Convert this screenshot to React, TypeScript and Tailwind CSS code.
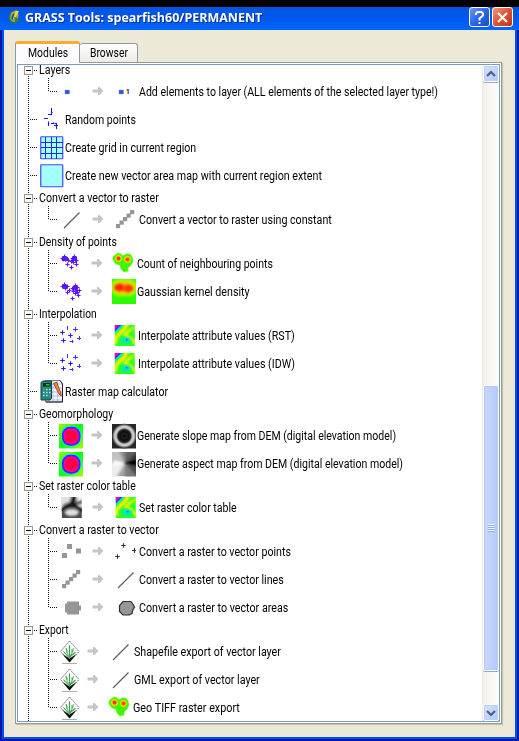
import { useLayoutEffect, useRef, useState } from "react";
import type { ReactNode } from "react";

/* Text squeezed horizontally to a known width, like the narrow bitmap system font. */
function Fit({ width, children }: { width: number; children: string }) {
  const ref = useRef<HTMLSpanElement>(null);
  const [scale, setScale] = useState(1);
  useLayoutEffect(() => {
    if (ref.current) setScale(width / ref.current.offsetWidth);
  }, [width, children]);
  return (
    <span className="block shrink-0 whitespace-nowrap" style={{ width }}>
      <span ref={ref} className="inline-block origin-left" style={{ transform: `scaleX(${scale})` }}>
        {children}
      </span>
    </span>
  );
}

function Defs() {
  return (
    <svg width="0" height="0" className="block h-0 w-0">
      <defs>
        <radialGradient id="hot">
          <stop offset="0" stopColor="#ff1800" />
          <stop offset=".3" stopColor="#ff5a00" />
          <stop offset=".6" stopColor="#ffd800" />
          <stop offset="1" stopColor="#50ff00" stopOpacity="0" />
        </radialGradient>
        <radialGradient id="slope">
          <stop offset="0" stopColor="#000" />
          <stop offset=".2" stopColor="#222" />
          <stop offset=".35" stopColor="#0c0c0c" />
          <stop offset=".52" stopColor="#262626" />
          <stop offset=".66" stopColor="#c4c4c4" />
          <stop offset=".78" stopColor="#d0d0d0" />
          <stop offset="1" stopColor="#262626" />
        </radialGradient>
        <linearGradient id="rim" x1="0" y1="0" x2="1" y2="1">
          <stop offset="0" stopColor="#8cff00" />
          <stop offset=".5" stopColor="#00ff18" />
          <stop offset="1" stopColor="#a8ff00" />
        </linearGradient>
        <filter id="b0" x="-30%" y="-30%" width="160%" height="160%"><feGaussianBlur stdDeviation=".4" /></filter>
        <filter id="b1" x="-30%" y="-30%" width="160%" height="160%"><feGaussianBlur stdDeviation=".8" /></filter>
        <filter id="b2" x="-50%" y="-50%" width="200%" height="200%"><feGaussianBlur stdDeviation="1.6" /></filter>
      </defs>
    </svg>
  );
}

function Icon({ children }: { children: ReactNode }) {
  return <svg className="block shrink-0" width="24" height="28" viewBox="0 0 24 28">{children}</svg>;
}

const Arrow = () => (
  <svg className="block shrink-0" width="12" height="28" viewBox="0 0 12 28">
    <path d="M.5 11.500h5.500V9h1.500L11 12.400v1.200L7.500 17H6v-2.500H.5z" fill="#c5c5c5" />
  </svg>
);

const Dot = () => <Icon><rect x="6" y="12" width="4.500" height="4" fill="#3156cf" stroke="#7b96e0" strokeWidth=".4" /></Icon>;
const DotOne = () => (
  <Icon>
    <rect x="7" y="12" width="4.500" height="4" fill="#3156cf" stroke="#7b96e0" strokeWidth=".4" />
    <text x="14" y="16" fontSize="6.500" fontFamily="Roboto, sans-serif" fontWeight="700" fill="#111">1</text>
  </Icon>
);
const Random = () => (
  <Icon>
    <path d="M11.500 2v7M8 8.500h4M4 12.500h4M8.500 15.500v4.500M11 17.500h6M16.500 17v6M14 19.500h4" stroke="#1515ff" strokeWidth="1.100" fill="none" />
    <path d="M13 16l2 2M12 6.500h1" stroke="#77f" />
  </Icon>
);
const Area = () => <Icon><rect x=".75" y="2.750" width="22" height="22" rx=".5" fill="#a6ffff" stroke="#4348ff" strokeWidth="1.200" /></Icon>;
const Grid = () => (
  <Icon>
    <rect x=".75" y="2.750" width="22" height="22" rx=".5" fill="#a6ffff" stroke="#4348ff" strokeWidth="1.200" />
    <path d="M5.500 3v22M11.500 3v22M16.500 3v22M1 8.500h22M1 13.500h22M1 19.500h22" stroke="#202fd0" strokeWidth="1" />
  </Icon>
);
const Line = () => <Icon><path d="M5 22L20.500 6.500" stroke="#606060" strokeWidth="1.300" /></Icon>;
const Stairs = () => (
  <Icon>
    {[0, 1, 2, 3, 4].map((i) => (
      <rect key={i} x={4 + i * 3.500} y={18 - i * 3.500} width="4.200" height="4.200" fill="#959595" />
    ))}
  </Icon>
);

function Crosses({ pts, color, r = 2 }: { pts: number[][]; color: string; r?: number }) {
  return <path d={pts.map(([x, y]) => `M${x - r} ${y}h${2 * r}M${x} ${y - r}v${2 * r}`).join("")} stroke={color} strokeWidth="1.100" fill="none" />;
}
const DenseA = () => (
  <Icon>
    <Crosses color="#5a14ff" pts={[[3.500, 8.500], [5.500, 6.500], [6.500, 9.500], [7.500, 8.500], [4.500, 9.500], [8.500, 14.500], [9.500, 10.500], [13.500, 8.500], [15.500, 6.500], [16.500, 10.500], [12.500, 11.500], [17.500, 10.500], [17.500, 14.500], [12.500, 17.500], [14.500, 12.500]]} />
    <path d="M3 7h6v4H3zM13 7h5v4h-5z" fill="#5a14ff" />
  </Icon>
);
const DenseB = () => (
  <Icon>
    <Crosses color="#5a14ff" pts={[[3.500, 8.500], [5.500, 6.500], [6.500, 10.500], [8.500, 8.500], [8.500, 14.500], [10.500, 12.500], [13.500, 10.500], [16.500, 7.500], [18.500, 9.500], [17.500, 12.500], [14.500, 13.500], [19.500, 17.500], [20.500, 12.500], [13.500, 20.500], [16.500, 15.500], [18.500, 14.500]]} />
    <path d="M4 7h4v4H4zM14 8h5v4h-5z" fill="#5a14ff" />
  </Icon>
);
const Sparse = () => (
  <Icon>
    <Crosses color="#2218f5" pts={[[3.500, 10.500], [11.500, 13.500], [4.500, 18.500]]} r={2.300} />
    <path d="M8.500 4v4M14 7.500h5M16.500 5v4.500M10.500 19.500h4M13.500 18v3M18 16.500h4M20.500 14v4" stroke="#3b32f5" strokeWidth="1" />
  </Icon>
);
const Blob = () => (
  <Icon>
    <path d="M1 7l2-2 3-2 3 1 2 2 3-2h4l2 3 1 4-2 4-3 3v3l-4 1-3-3-1-4-4-1-3-4z" fill="#3df500" stroke="#69ff00" strokeWidth=".7" />
    <circle cx="6.500" cy="8.500" r="4.600" fill="url(#hot)" />
    <circle cx="15.500" cy="9.500" r="4.600" fill="url(#hot)" />
    <circle cx="6.500" cy="8.500" r="1.400" fill="#f22b10" filter="url(#b0)" />
  </Icon>
);
const Kernel = () => (
  <Icon>
    <svg y="1" width="24" height="25" viewBox="0 1 24 25">
      <rect y="1" width="24" height="25" fill="#2dfb00" />
      <rect x="-1" y="1" width="26" height="17" rx="8" fill="#a4ff00" filter="url(#b2)" />
      <ellipse cx="12" cy="10" rx="11" ry="6" fill="#ffb700" filter="url(#b2)" />
      <ellipse cx="7.500" cy="9.500" rx="5" ry="3.700" fill="#ff2000" filter="url(#b1)" />
      <ellipse cx="16" cy="10.500" rx="5" ry="3.700" fill="#ff3200" filter="url(#b1)" />
    </svg>
  </Icon>
);
const Rainbow = () => (
  <Icon>
    <svg x="2.500" y="3" width="20.500" height="21" viewBox="0 0 20 21">
      <rect width="20" height="21" fill="#28ff20" />
      <g filter="url(#b1)" fill="none">
        <path d="M13-2L9 5 5 8l-4 5-1 6" stroke="#fff400" strokeWidth="3.600" />
        <path d="M21 2l-6 3-5 5 6 3 5 6" stroke="#fff400" strokeWidth="2.600" />
        <path d="M11 2L4 9 0 13" stroke="#ffe800" strokeWidth="2" />
        <path d="M20 0l-3 5" stroke="#6aff10" strokeWidth="2" />
      </g>
      <g filter="url(#b0)">
        <path d="M0 0h9L6 4 0 9z" fill="#28f060" />
        <path d="M0 0h8L4 4 0 8z" fill="#00d8ff" />
        <path d="M0 0h6.500L3 3.500 0 6.500z" fill="#2030ff" />
        <path d="M0 0h5L0 5z" fill="#e000d8" />
        <path d="M0 0h2.500L0 2.500z" fill="#ff1060" />
      </g>
      <g filter="url(#b1)">
        <ellipse cx="11" cy="15.500" rx="5.500" ry="3.500" fill="#00f880" />
        <ellipse cx="11.500" cy="15" rx="3.500" ry="1.900" fill="#00d5f5" />
      </g>
      <circle cx="12" cy="14.700" r=".9" fill="#1678ff" filter="url(#b0)" />
    </svg>
  </Icon>
);
const Dem = () => (
  <Icon>
    <rect y="2" width="24" height="24.500" fill="url(#rim)" />
    <g filter="url(#b0)">
      <rect x="2.200" y="4" width="20" height="20.500" rx="8.500" fill="#00efe8" />
      <rect x="3" y="4.800" width="18.400" height="18.900" rx="8" fill="#1a34ff" />
      <rect x="4" y="5.800" width="16.400" height="16.900" rx="7" fill="#8a00f0" />
      <rect x="4.800" y="6.600" width="14.800" height="15.300" rx="6.500" fill="#ff0090" />
      <rect x="6.500" y="8.500" width="11.500" height="11.500" rx="5" fill="#ff0440" />
    </g>
  </Icon>
);
const Slope = () => (
  <Icon>
    <rect y="2" width="24" height="24.500" fill="#262626" />
    <circle cx="12.300" cy="14" r="12.300" fill="url(#slope)" />
  </Icon>
);
const Aspect = () => (
  <Icon>
    <svg y="2" width="24" height="24.500" viewBox="0 0 24 24">
      <rect width="24" height="24" fill="#a0a0a0" />
      <g filter="url(#b2)">
        <path d="M13 11L-3 2v26h6z" fill="#eee" />
        <path d="M13 11L-3 10V-3h9z" fill="#c2c2c2" />
        <path d="M13 11L6-3h8z" fill="#8c8c8c" />
        <path d="M13 11V-3h14z" fill="#606060" />
        <path d="M13 11L27-3v9z" fill="#353535" />
        <path d="M13 11l14 2v14z" fill="#4c4c4c" />
        <path d="M13 11l14 16H13z" fill="#7c7c7c" />
      </g>
      <path d="M12 11l13-5v8z" fill="#000" filter="url(#b1)" />
      <path d="M12 11L2 8v6z" fill="#fff" filter="url(#b1)" />
    </svg>
  </Icon>
);
const GrayDem = () => (
  <Icon>
    <svg x="2.500" y="3" width="20.500" height="21" viewBox="0 0 20 21">
      <rect width="20" height="21" fill="#484848" />
      <g filter="url(#b1)">
        <path d="M-2-2h12L8 5l-5 2-5 5z" fill="#e0e0e0" />
        <path d="M14-2h8v5l-7 2z" fill="#eee" />
        <path d="M14 8l8-2v5z" fill="#eee" />
        <path d="M14-1L9 7-1 13M8 7l5 1 8 6" fill="none" stroke="#0c0c0c" strokeWidth="3" />
        <ellipse cx="10" cy="15.500" rx="7" ry="3.500" fill="#dedede" />
      </g>
    </svg>
  </Icon>
);
const RasterPts = () => <Icon><path d="M8 6h5v5H8zM17 10.500h5v5h-5zM3 15h5v5H3z" fill="#969696" /></Icon>;
const VectorPts = () => <Icon><Crosses color="#333" r={2.300} pts={[[11.500, 7.500], [5.500, 18.500]]} /><path d="M20 12.500h4M22.500 10v5" stroke="#333" strokeWidth="1.100" /></Icon>;
const RasterArea = () => <Icon><path d="M8 7.500h12v4h2v5h-2v4H8v-2H6v-9h2z" fill="#969696" /></Icon>;
const VectorArea = () => <Icon><path d="M11 7.500h8l2.500 3.500 1 2.500-1.500 2-1 4-3 1.500h-6l-3.500-3.500v-6z" fill="#969696" stroke="#303030" strokeWidth="1.200" /></Icon>;
const Grass = () => (
  <Icon>
    <path d="M9.500 3L19 13.500 9.500 24 .5 13.500z" fill="#fff" stroke="#b5b5b5" strokeWidth=".8" />
    <path d="M9.500 3L19 13.500 9.500 24 .5 13.500z" fill="none" stroke="#555" strokeWidth=".8" strokeDasharray="1 1.500" />
    <path d="M2.500 16L9.500 20.500 16.500 16 9.500 24.500z" fill="#0b0b0b" />
    <path d="M8.500 19.500L6 10M9.500 21V7.500M10 19.500L13.500 10.500M8 18.500L3.500 13.500M11 18l4.500-4" fill="none" stroke="#3da04a" strokeWidth="1.100" />
    <path d="M7.500 17.500V12M11.500 16v-5" stroke="#8fcf94" strokeWidth=".8" />
    <path d="M2 25.500h15" stroke="#999" strokeWidth=".8" />
  </Icon>
);
const Calculator = () => (
  <Icon>
    <path d="M5.500 2.500H20l2.500 3V24h-17z" fill="#f8f9ff" stroke="#555" strokeWidth=".8" />
    <path d="M12 6h10M12 10h10M12 14h10M12 18h10M8 22h14M13 3v21M17.500 3v21M9 20v4" stroke="#9ca9e8" strokeWidth=".7" />
    <path d="M20 2.500l2.500 3.500V24H6" fill="none" stroke="#222" strokeWidth="1" />
    <path d="M13.500 5.500L16.500 4l4.500 11 .3 3-2.300-2z" fill="#ef8a30" stroke="#6b2810" strokeWidth=".7" />
    <path d="M1 4.500L3 3h8.500v17.500L10 22H1z" fill="#188b83" stroke="#104540" strokeWidth="1" />
    <path d="M3 5h7.500v3.500H3z" fill="#082a12" />
    <path d="M6 6.800h3.500" stroke="#33e53a" strokeWidth="1.200" />
    <path d="M3 11.500h1.500M6 11.500h1.500M9 11.500h1.500M3 14.500h1.500M6 14.500h1.500M9 14.500h1.500M3 17.500h1.500M6 17.500h1.500M9 17.500h1.500" stroke="#c7e3dc" strokeWidth="1.300" />
    <path d="M3 11.500h1.500M9 17.500h1.500" stroke="#e33b2c" strokeWidth="1.300" />
  </Icon>
);

/* Dotted branch lines at the left of each tree row. */
function Guide({ kind, last }: { kind: "group" | "root" | "child"; last?: boolean }) {
  const h = kind === "group" ? 16 : 28;
  return (
    <svg className="block shrink-0" width="39" height={h} viewBox={`0 0 39 ${h}`} shapeRendering="crispEdges">
      <path d={`M10.500 0v${h}`} stroke="#111" strokeDasharray="1 1" />
      {kind === "group" && (
        <>
          <path d="M16 8.500h4" stroke="#111" strokeDasharray="1 1" />
          <rect x="6.500" y="4.500" width="8" height="8" fill="#fff" stroke="#9c9a8c" />
          <path d="M8 8.500h5" stroke="#000" />
        </>
      )}
      {kind === "root" && <path d="M12 13.500h7" stroke="#111" strokeDasharray="1 1" />}
      {kind === "child" && (
        <path d={`M30.500 0v${last ? 14 : 28}M32 13.500h7`} stroke="#111" strokeDasharray="1 1" />
      )}
    </svg>
  );
}

function Group({ w, children }: { w: number; children: string }) {
  return (
    <div className="flex h-4 shrink-0 items-center">
      <div className="-mr-[18px]"><Guide kind="group" /></div>
      <Fit width={w}>{children}</Fit>
    </div>
  );
}
function Root({ icon, x, w, children }: { icon: ReactNode; x: number; w: number; children: string }) {
  return (
    <div className="flex h-7 shrink-0 items-center">
      <div className="-mr-[17px]"><Guide kind="root" /></div>
      {icon}
      <div style={{ marginLeft: x - 64 }}><Fit width={w}>{children}</Fit></div>
    </div>
  );
}
interface ChildProps { from: ReactNode; to: ReactNode; last?: boolean; a?: number; arrow?: number; b?: number; x: number; w: number; children: string }
function Child({ from, to, last = false, a = 59, arrow = 92, b = 112, x, w, children }: ChildProps) {
  return (
    <div className="flex h-7 shrink-0 items-center">
      <Guide kind="child" last={last} />
      <div style={{ marginLeft: a - 57 }}>{from}</div>
      <div style={{ marginLeft: arrow - a - 24 }}><Arrow /></div>
      <div style={{ marginLeft: b - arrow - 12 }}>{to}</div>
      <div style={{ marginLeft: x - b - 24 }}><Fit width={w}>{children}</Fit></div>
    </div>
  );
}

function ScrollButton({ down = false }: { down?: boolean }) {
  return (
    <div className="flex h-[17px] w-4 shrink-0 items-center justify-center rounded-[2px] border border-white bg-gradient-to-br from-[#d6e2ff] to-[#b3c8fb] shadow-[inset_0_0_0_1px_#bdcdf5,0_1px_0_#8fa9d5]">
      <svg width="10" height="8" viewBox="0 0 10 8">
        <path d={down ? "M1 2l4 4 4-4" : "M1 6l4-4 4 4"} fill="none" stroke="#4d6185" strokeWidth="2.200" />
      </svg>
    </div>
  );
}

export default function App() {
  return (
    <div className="flex h-[741px] w-[519px] flex-col overflow-hidden bg-black pt-[7px] font-[Roboto,sans-serif] text-[12px] leading-4 text-black">
      <Defs />
      <header className="flex h-[23px] shrink-0 items-start bg-gradient-to-b from-[#0054e0] via-[#0058ee] to-[#0068ff] pl-[8px] pr-[6px]">
        <svg className="mr-[3px] mt-[2px] shrink-0" width="14" height="16" viewBox="0 0 14 16">
          <ellipse cx="6" cy="7.500" rx="3.200" ry="4.600" transform="rotate(22 6 7.500)" fill="#1c4fa0" stroke="#a8a832" strokeWidth="2.200" />
          <path d="M7.500 1.500l3.500.5-2 4-3 5-1-1z" fill="#e5d84a" />
          <path d="M6 8l4 1.500 1 4-4-2z" fill="#2a8a30" />
          <path d="M2 5l-.5 5.500 3 3 4 .5" fill="none" stroke="#2f7836" strokeWidth="1.400" />
        </svg>
        <div className="font-['Open_Sans',sans-serif] text-[13px] font-bold leading-5 text-white [text-shadow:1px_1px_0_#0a2b90]">
          <Fit width={237}>GRASS Tools: spearfish60/PERMANENT</Fit>
        </div>
        <div className="ml-auto flex gap-[2px]">
          <div className="flex h-5 w-[21px] items-center justify-center rounded-[3px] border border-white bg-gradient-to-br from-[#6d98f7] via-[#2e65e6] to-[#164cc8]">
            <svg width="13" height="15" viewBox="0 0 13 15"><path d="M3 5V3.500L4.500 2h4L10 3.500V5.500L6.500 8.500V10.500M6.500 12v2" fill="none" stroke="#fff" strokeWidth="1.900" /></svg>
          </div>
          <div className="flex h-5 w-[21px] items-center justify-center rounded-[3px] border border-white bg-gradient-to-br from-[#ef987c] via-[#e0502d] to-[#c13412]">
            <svg width="13" height="13" viewBox="0 0 13 13"><path d="M2 2l9 9M11 2l-9 9" stroke="#fff" strokeWidth="2.200" /></svg>
          </div>
        </div>
      </header>

      <main className="flex min-h-0 flex-1 flex-col border-x-2 border-b-2 border-[#0018a8]">
        <div className="flex min-h-0 flex-1 flex-col border-x-2 border-b-2 border-[#0050ee] bg-[#ece9d8]">
          <div className="ml-[11px] flex h-8 shrink-0 items-end">
            <div className="z-10 -mb-px flex h-[22px] w-[65px] items-center justify-center rounded-t-[3px] border-x border-t-[3px] border-x-[#919b9c] border-t-[#f9ae2b] bg-[#fcfcfe] pb-px">
              <Fit width={40}>Modules</Fit>
            </div>
            <div className="flex h-[19px] w-[58px] items-center justify-center rounded-t-[3px] border-r border-t border-[#919b9c] bg-gradient-to-b from-white to-[#ecebe6]">
              <Fit width={38}>Browser</Fit>
            </div>
          </div>
          <div className="ml-[11px] flex h-[662px] w-[487px] shrink-0 border border-[#919b9c] bg-white p-px shadow-[1px_1px_1px_#c8c5b5]">
            <div className="flex min-w-0 flex-1 overflow-hidden border border-[#7f9db9]">
              <div className="-mt-[3px] flex min-w-0 flex-1 flex-col">
                <Group w={31}>Layers</Group>
                <Child from={<Dot />} to={<DotOne />} last x={139} w={299}>Add elements to layer (ALL elements of the selected layer type!)</Child>
                <Root icon={<Random />} x={65} w={71}>Random points</Root>
                <Root icon={<Grid />} x={65} w={131}>Create grid in current region</Root>
                <Root icon={<Area />} x={65} w={257}>Create new vector area map with current region extent</Root>
                <Group w={120}>Convert a vector to raster</Group>
                <Child from={<Line />} to={<Stairs />} last x={139} w={193}>Convert a vector to raster using constant</Child>
                <Group w={78}>Density of points</Group>
                <Child from={<DenseA />} to={<Blob />} arrow={91} x={137} w={136}>Count of neighbouring points</Child>
                <Child from={<DenseB />} to={<Kernel />} last arrow={91} x={137} w={113}>Gaussian kernel density</Child>
                <Group w={58}>Interpolation</Group>
                <Child from={<Sparse />} to={<Rainbow />} arrow={91} x={138} w={157}>Interpolate attribute values (RST)</Child>
                <Child from={<Sparse />} to={<Rainbow />} last arrow={91} x={138} w={157}>Interpolate attribute values (IDW)</Child>
                <Root icon={<Calculator />} x={65} w={103}>Raster map calculator</Root>
                <Group w={74}>Geomorphology</Group>
                <Child from={<Dem />} to={<Slope />} arrow={91} x={137} w={259}>Generate slope map from DEM (digital elevation model)</Child>
                <Child from={<Dem />} to={<Aspect />} last arrow={91} x={137} w={266}>Generate aspect map from DEM (digital elevation model)</Child>
                <Group w={97}>Set raster color table</Group>
                <Child from={<GrayDem />} to={<Rainbow />} last b={113} x={139} w={98}>Set raster color table</Child>
                <Group w={120}>Convert a raster to vector</Group>
                <Child from={<RasterPts />} to={<VectorPts />} x={139} w={152}>Convert a raster to vector points</Child>
                <Child from={<Stairs />} to={<Line />} a={58} b={113} x={139} w={145}>Convert a raster to vector lines</Child>
                <Child from={<RasterArea />} to={<VectorArea />} last x={139} w={149}>Convert a raster to vector areas</Child>
                <Group w={30}>Export</Group>
                <Child from={<Grass />} to={<Line />} a={60} arrow={87} b={108} x={134} w={147}>Shapefile export of vector layer</Child>
                <Child from={<Grass />} to={<Line />} a={60} arrow={87} b={108} x={134} w={126}>GML export of vector layer</Child>
                <Child from={<Grass />} to={<Blob />} last a={60} arrow={87} b={108} x={133} w={107}>Geo TIFF raster export</Child>
              </div>
              <div className="flex w-[17px] shrink-0 flex-col items-center border-l border-[#eeede5] bg-gradient-to-r from-[#f3f1ec] to-[#fefefb]">
                <ScrollButton />
                <div className="mt-[303px] flex h-[286px] w-4 shrink-0 flex-col items-center rounded-[2px] border border-white bg-gradient-to-r from-[#c9d8fc] to-[#b6cafa] pt-[138px] shadow-[inset_0_0_0_1px_#b5c8f4,0_1px_0_#8ca7d4]">
                  <div className="h-2 w-[7px] bg-[repeating-linear-gradient(to_bottom,#eef4fe_0px,#eef4fe_1px,#8cb0f8_1px,#8cb0f8_2px)]" />
                </div>
                <div className="mt-auto"><ScrollButton down /></div>
              </div>
            </div>
          </div>
        </div>
      </main>
    </div>
  );
}
